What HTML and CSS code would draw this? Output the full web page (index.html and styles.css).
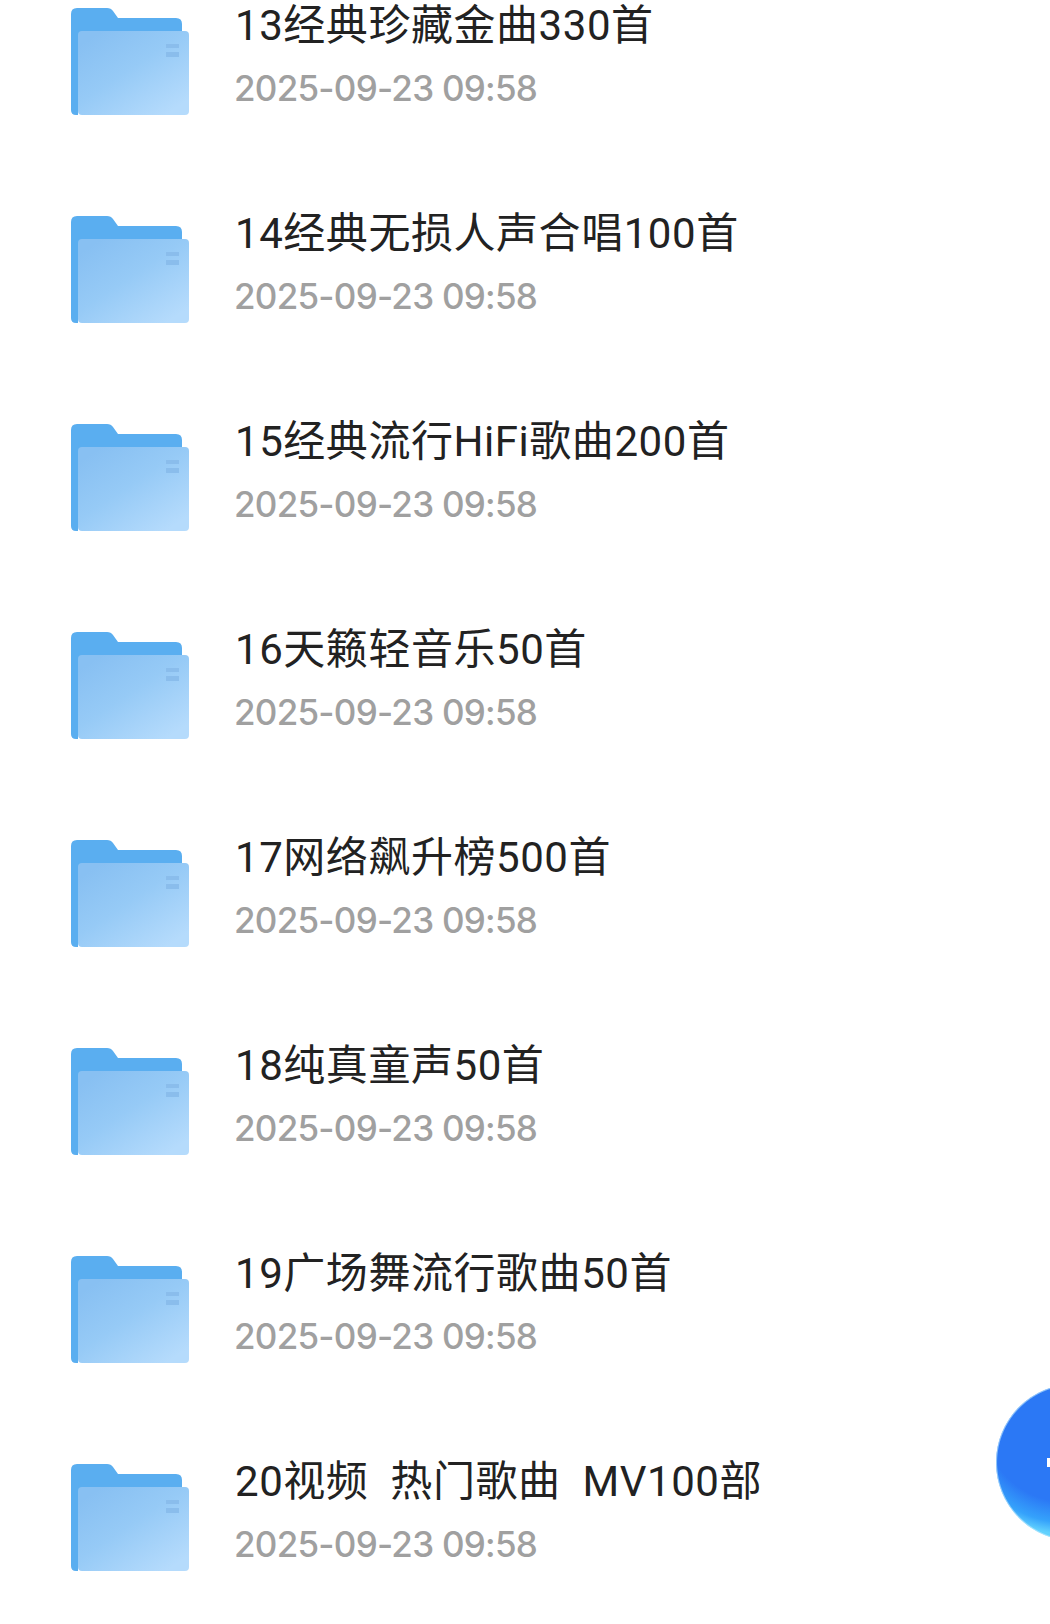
FILE: index.html
```html
<!DOCTYPE html>
<html lang="zh-CN">
  <head>
    <meta charset="utf-8">
    <title>文件列表</title>
    <link rel="stylesheet" href="styles.css">
  </head>
  <body>
    <svg class="sprite" width="0" height="0">
      <defs>
        <linearGradient id="frontFill" x1="0.1" y1="0.1" x2="0.85" y2="0.95">
          <stop offset="0" stop-color="#88c0f2"/>
          <stop offset="0.45" stop-color="#96caf6"/>
          <stop offset="1" stop-color="#b5dbfc"/>
        </linearGradient>
        <symbol id="folder" viewBox="0 0 118 108">
          <path d="M6 0H36Q40 0 42 3L47 10H105Q111 10 111 16V30H7V107H5Q0 107 0 102V6Q0 0 6 0Z" fill="#5aaef0"/>
          <rect x="7" y="23" width="111" height="84" rx="4" fill="url(#frontFill)"/>
          <rect x="95" y="36" width="13" height="4" fill="#8abdec"/>
          <rect x="95" y="44" width="13" height="5" fill="#8abdec"/>
        </symbol>
      </defs>
    </svg>

    <ul class="file-list">
      <li class="file-row">
        <svg class="folder-icon"><use href="#folder"/></svg>
        <div class="file-info">
          <div class="file-name">13经典珍藏金曲330首</div>
          <div class="file-date">2025-09-23 09:58</div>
        </div>
      </li>
      <li class="file-row">
        <svg class="folder-icon"><use href="#folder"/></svg>
        <div class="file-info">
          <div class="file-name">14经典无损人声合唱100首</div>
          <div class="file-date">2025-09-23 09:58</div>
        </div>
      </li>
      <li class="file-row">
        <svg class="folder-icon"><use href="#folder"/></svg>
        <div class="file-info">
          <div class="file-name">15经典流行HiFi歌曲200首</div>
          <div class="file-date">2025-09-23 09:58</div>
        </div>
      </li>
      <li class="file-row">
        <svg class="folder-icon"><use href="#folder"/></svg>
        <div class="file-info">
          <div class="file-name">16天籁轻音乐50首</div>
          <div class="file-date">2025-09-23 09:58</div>
        </div>
      </li>
      <li class="file-row">
        <svg class="folder-icon"><use href="#folder"/></svg>
        <div class="file-info">
          <div class="file-name">17网络飙升榜500首</div>
          <div class="file-date">2025-09-23 09:58</div>
        </div>
      </li>
      <li class="file-row">
        <svg class="folder-icon"><use href="#folder"/></svg>
        <div class="file-info">
          <div class="file-name">18纯真童声50首</div>
          <div class="file-date">2025-09-23 09:58</div>
        </div>
      </li>
      <li class="file-row">
        <svg class="folder-icon"><use href="#folder"/></svg>
        <div class="file-info">
          <div class="file-name">19广场舞流行歌曲50首</div>
          <div class="file-date">2025-09-23 09:58</div>
        </div>
      </li>
      <li class="file-row">
        <svg class="folder-icon"><use href="#folder"/></svg>
        <div class="file-info">
          <div class="file-name">20视频  热门歌曲  MV100部</div>
          <div class="file-date">2025-09-23 09:58</div>
        </div>
      </li>
    </ul>

    <div class="fab"><span class="fab-plus"></span></div>
  </body>
</html>
```

FILE: styles.css
```css
html,
body {
  margin: 0;
  height: 100%;
  background-color: #fff;
  overflow: hidden;
}

body {
  position: relative;
  font-family: "Roboto", "Noto Sans CJK SC", sans-serif;
}

.sprite {
  display: block;
}

.file-list {
  list-style: none;
  margin: 0;
  padding: 0 0 0 71px;
}

.file-row {
  display: flex;
  height: 208px;
}

.folder-icon {
  width: 118px;
  height: 108px;
  margin-top: 8px;
  flex-shrink: 0;
}

.file-info {
  margin-left: 46px;
}

.file-name {
  font-size: 42px;
  line-height: 52px;
  letter-spacing: 0.55px;
  color: #222;
  white-space: pre;
}

.file-date {
  margin: 10px 0 0 -1px;
  font-family: "Inter", sans-serif;
  font-size: 35px;
  font-weight: 500;
  line-height: 52px;
  letter-spacing: -0.75px;
  color: #a0a0a0;
}

/* the button sits mostly off screen, only its left part shows */
.fab {
  position: absolute;
  left: 996px;
  top: 1384px;
  width: 54px;
  height: 157px;
  clip-path: circle(78.5px at 78.5px 78.5px);
  background:
    radial-gradient(circle 78.5px at 78.5px 78.5px, transparent 98%, #bde8fd 100%),
    radial-gradient(circle 115px at 70px 35px, #2b78f5 72%, #35a2fb 90%, #62d2fe 100%);
}

.fab-plus {
  display: block;
  width: 3px;
  height: 9px;
  margin: 74px 0 0 51px;
  background-color: #fff;
}
```
